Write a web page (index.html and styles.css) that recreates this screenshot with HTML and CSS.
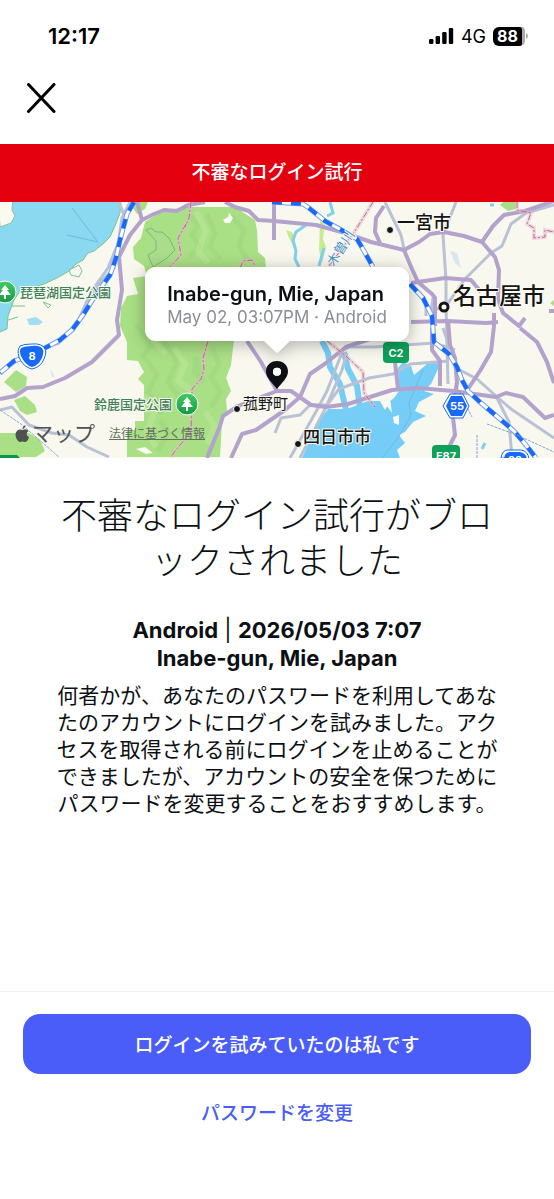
FILE: index.html
```html
<!DOCTYPE html>
<html lang="ja">
<head>
<meta charset="utf-8">
<meta name="viewport" content="width=device-width, initial-scale=1">
<title>不審なログイン試行</title>
<link rel="stylesheet" href="styles.css">
</head>
<body>
<div class="screen">
  <div class="status">
    <span class="clock">12:17</span>
    <div class="indicators">
      <svg class="signal" width="25" height="18" viewBox="0 0 25 18" aria-hidden="true"><rect x="0" y="12" width="4.400" height="5" rx="1.200"/><rect x="6.600" y="9" width="4.400" height="8" rx="1.200"/><rect x="13.200" y="5" width="4.400" height="12" rx="1.200"/><rect x="19.800" y="1" width="4.400" height="16" rx="1.200"/></svg>
      <span class="network">4G</span>
      <div class="battery"><span class="level">88</span><svg width="6" height="18" viewBox="0 0 6 18" aria-hidden="true"><path d="M0 0q3 0 3 5v8q0 5-3 5z" fill="#aaa"/><path d="M4 6q2 1 2 3t-2 3z" fill="#aaa"/></svg></div>
    </div>
  </div>
  <header class="bar">
    <button class="close" type="button" aria-label="閉じる"><svg width="30" height="30" viewBox="0 0 30 30" aria-hidden="true"><path d="M2.500 1.500L28 28.500M28 1.500L2.500 28.500"/></svg></button>
  </header>
  <div class="banner">不審なログイン試行</div>

  <section class="map" aria-label="地図">
    <svg class="canvas" viewBox="0 202 554 256" preserveAspectRatio="xMidYMid slice" aria-hidden="true">
      <defs>
        <linearGradient id="bay" x1="0" y1="0" x2="1" y2="1"><stop offset="0" stop-color="#7ad0f6"/><stop offset="1" stop-color="#72ccf8"/></linearGradient>
        <linearGradient id="tree" x1="0" y1="0" x2="0" y2="1"><stop offset="0" stop-color="#43cc64"/><stop offset="1" stop-color="#139a43"/></linearGradient>
        <path id="motorways" d="M134 202L127 214L120 240L116 258L110 275L95 296L83 315L72 330L60 340L32 355L14 361L0 373M272 202L303 204L309 208L325 221L345 232L357 239L364 251L373 267M410 284L423 298L432 316L434 342L449 354L457 367L462 380L468 391L481 403L500 419L514 431L526 445L536 458"/>
      </defs>
      <rect y="202" width="554" height="256" fill="#f9f8ef"/>

      <path class="lake" d="M0 200H121L120 213L115 226L110 237L103 244L94 251L88 253L83 260L76 264L69 271L57 278L44 284L30 288L20 291L14 300L8 316L7 329L0 332Z"/>
      <path class="land" d="M-2 198H13L12 210L15 216L11 223L0 227Z"/>
      <path class="shore" d="M121 200L120 213L115 226L110 237L103 244L94 251L88 253L83 260L76 264L69 271L57 278L44 284L30 288L20 291L14 300L8 316L7 329L0 332M69 270L79 265L82 271L79 277L71 275ZM12 306H25M8 320L18 317M43 302L51 305L48 308Z"/>
      <path d="M67 235L98 242L72 208" class="route"/>
      <path d="M27 319L36 317L43 322L39 325H29Z" fill="#a6dcf2"/>

      <path class="forest" d="M186 207L162 211L145 222L141 238L133 247L134 259L144 266L147 276L133 278L138 294L127 296L121 308L120 326L127 342L127 360L138 361L144 372L138 379L144 385V421H135V430H127V457H220L222 422L227 411L226 399L231 391L226 378L231 365L233 348L240 300L266 269L265 258L258 252L257 230L255 220L244 213L235 207Z"/>
      <path class="forest" d="M130 202H148L145 209L137 214L133 208ZM4 382L16 370L27 377L26 386L16 392ZM14 400L25 396L35 405L37 412L27 415L20 411ZM0 433H29L40 440L45 451L36 457H0ZM503 202H516V209L508 211L500 205ZM550 303L554 300V306Z"/>
      <path fill="#c8ea91" d="M286 230L292 232L295 238L293 246L289 238ZM320 221L325 224L323 239L326 247L322 263L319 250Z"/>
      <path class="ridge-dark" d="M155 280L167 290L158 302L170 314L160 327M188 214L198 225L192 235L199 246L189 258M207 214L215 233L210 247L221 260M232 216L244 230L239 247L249 261M136 325L151 345L143 356L157 374L148 393L162 414M162 338L177 362L168 382L181 400M212 347L219 364L211 377L220 392L211 407M160 420L168 434L158 451M196 357L203 382L194 372Z"/>
      <path class="ridge-light" d="M149 302L163 319L151 338L166 354M174 348L185 364L178 381L192 391M196 211L206 231L198 251L208 263M145 395L154 413L147 432L156 447M205 412L215 426L207 444"/>
      <path fill="#fbfaf2" d="M229 213L233 218L230 223H225L223 220L228 217ZM136 449L145 447L153 453L146 454Z"/>
      <path class="park" d="M146 230L151 228L156 232L162 232L169 238L175 250L166 259L153 267L148 255L156 250V241Z"/>

      <path class="bay" d="M302 458L309 443L316 424L328 409L347 409L368 401H380L385 410L390 401L394 398L399 391L398 368L403 362L411 366L414 375L427 364L437 361L439 367L431 384L424 391L434 394L419 402L415 411L426 416L413 422L405 432L399 435L405 443L397 450L400 458Z"/>
      <path fill="#fbfaf2" d="M384 403L390 398L392 413L387 406ZM393 417L399 415V425L394 423Z"/>
      <path class="channel" d="M322 341L328 353L330 367L340 384L346 410M344 352L348 369L357 386L360 408"/>
      <path class="route" d="M423 370L409 403L411 416L397 439L382 458"/>
      <path class="stream" d="M306 225L296 232L293 240L296 251L295 259L299 267M330 202L333 213L327 216M319 266L324 248M490 205H494M482 449L485 443"/>
      <path fill="#d7e6f2" d="M450 251L457 253L461 268L455 263ZM50 368L55 377L52 377Z"/>

      <g class="minor">
        <path d="M119 202L126 220L117 246L108 268L91 292L78 321L59 343L34 351L0 371"/>
        <path d="M130 202L122 218L118 245L114 268L97 286L89 302"/>
        <path d="M0 410L12 407L29 425L52 433L69 435L87 447L109 457"/>
        <path d="M385 202L401 235L404 249M456 202L443 235L446 280V304L448 384M554 205L526 213L511 224L502 246L491 253L465 279L446 306L431 311L433 298"/>
        <path d="M290 458L318 408L327 391L343 350L365 340M300 458L326 407L342 370L347 353M275 433L281 418L300 415L310 405H327L339 389L369 378L393 374L410 364L449 361M345 347H375L434 343L455 350M426 303V316M443 328L450 348"/>
        <path d="M456 368L477 379L496 396L511 409L554 438M496 396L509 422L512 458"/>
      </g>
      <g class="major">
        <path d="M137 202L142 220L130 235L119 257L122 290L117 320L119 335L111 343L92 362L65 378L43 387L27 388L15 396L0 399M142 220L154 214L164 210L177 211L188 205L205 202"/>
        <path d="M225 202L235 207L249 211L258 220L274 221L316 225L345 233L371 242L404 250L419 242L430 234L444 232L464 236L482 242L493 226L504 215L525 211L554 201M274 201V240"/>
        <path d="M384 206L376 218L375 232L380 243M404 250L412 269L418 282L432 294L435 298V326M411 283L445 278L471 280L481 292M482 242L495 257L499 270L498 299L503 313L519 326L525 318M494 313L494 326L491 352L480 371L468 389M411 322L447 321L486 323L498 322M432 328V350L440 361V386M448 320L450 345L455 358L457 383L452 409L455 435L449 447"/>
        <path d="M247 341L261 362L277 391L291 391L311 405L326 407L348 404L370 397L392 390L418 388L453 391L496 397L506 393L523 397L545 418L554 415M207 458L220 426L223 416L238 406L277 391M231 458L242 434L256 430L285 410L300 397L310 374L326 363L346 347L373 338M395 362L398 389M520 328L537 342L547 362L554 383M549 311H554"/>
      </g>
      <use href="#motorways" class="motorway-case"/>
      <use href="#motorways" class="motorway-core"/>
      <use href="#motorways" class="motorway"/>
      <path class="ferry" d="M0 410L21 424L59 457M487 424L517 435L554 452M477 435V458M455 383L472 417"/>
      <g class="borders">
        <path id="bounds" class="border-case" d="M191 202L189 218L185 227M186 224L178 238L181 255L170 267M240 268L243 261L252 260L255 266M373 202L355 231L329 266M327 341L346 356L363 372L364 393L375 407M517 202V210L531 213L527 224L534 228V238L545 237V230L554 232M208 341L203 358L204 370L201 379L192 389L191 432L175 451L171 457"/>
        <path class="border" d="M191 202L189 218L185 227M186 224L178 238L181 255L170 267M240 268L243 261L252 260L255 266M373 202L355 231L329 266M327 341L346 356L363 372L364 393L375 407M517 202V210L531 213L527 224L534 228V238L545 237V230L554 232M208 341L203 358L204 370L201 379L192 389L191 432L175 451L171 457"/>
      </g>

      <g class="shield">
        <path d="M32 344Q42 343 45 349Q47 352 44 359Q41 366 35 368Q32 370 29 368Q22 365 19 357Q17 350 20 346Q24 344 32 344Z" fill="#fff" stroke="#1769f8" stroke-width="1"/>
        <path d="M32 346Q41 345 43 350Q44 352 42 358Q38 366 32 367Q25 365 21 356Q19 351 21 348Q25 346 32 346Z" fill="#1769f8"/>
        <text x="32" y="360">8</text>
        <path d="M450 394H463L469 406L463 418H450L443 406Z" fill="#fff" stroke="#1769f8"/>
        <path d="M451 396H462L467 406L462 416H451L446 406Z" fill="#1769f8"/>
        <text x="457" y="410">55</text>
        <rect x="383" y="342" width="26" height="21" rx="4" fill="#0da15a"/><text x="396" y="357">C2</text>
        <rect x="432" y="445" width="28" height="21" rx="4" fill="#0da15a"/><text x="446" y="460">E87</text>
        <path d="M501 458Q502 450 508 450H521Q528 451 529 459Z" fill="#fff" stroke="#1769f8"/><path d="M504 458Q505 452 510 452H520Q526 453 527 459Z" fill="#1769f8"/><text x="515" y="464">23</text>
        <path d="M0 455H17L20 458H0Z" fill="#0a9454"/>
      </g>
      <g>
        <g><circle cx="5" cy="292" r="11" fill="url(#tree)" stroke="#fff"/><path d="M5 285L9 290H7L11 295H6V299H4V295H-1L3 290H1Z" fill="#fff"/></g>
        <g><circle cx="187" cy="404" r="11" fill="url(#tree)" stroke="#fff"/><path d="M187 397L191 402H189L193 407H188V411H186V407H181L185 402H183Z" fill="#fff"/></g>
      </g>
      <g class="place-dots"><circle cx="390" cy="230" r="3.500"/><circle cx="237" cy="409" r="3.500"/><circle cx="298" cy="444" r="3.500"/></g>
      <circle cx="444" cy="307" r="4" fill="#fff" stroke="#151515" stroke-width="3"/>
      <g class="labels">
        <text class="park-name" x="20" y="297">琵琶湖国定公園</text>
        <text class="park-name" x="94" y="409">鈴鹿国定公園</text>
        <text class="town" x="397" y="229">一宮市</text>
        <text class="city" x="453" y="304">名古屋市</text>
        <text class="village" x="243" y="409">菰野町</text>
        <text class="town bold" x="303" y="443">四日市市</text>
        <text class="river" transform="translate(334 267) rotate(-57)">木曽川</text>
      </g>
    </svg>
    <div class="callout">
      <strong class="place">Inabe-gun, Mie, Japan</strong>
      <span class="when">May 02, 03:07PM · Android</span>
    </div>
    <svg class="pin" width="24" height="30" viewBox="0 0 24 30" aria-hidden="true"><path fill-rule="evenodd" d="M12 1C5.500 1 1 5.500 1 11.500C1 18 7.500 23 12 29C16.500 23 23 18 23 11.500C23 5.500 18.500 1 12 1ZM12 7.800A4 4 0 1 1 12 15.800A4 4 0 1 1 12 7.800Z"/><circle cx="12" cy="11.800" r="4" fill="#fff"/></svg>
    <div class="credits">
      <span class="brand"><svg width="15" height="18" viewBox="0 0 15 18" aria-hidden="true"><path d="M10.500 0Q10.700 3 7.500 4.200Q7.400 1.300 10.500 0ZM7.700 5Q10.800 3.200 13.500 6Q9.500 9 14 12.500Q11.700 18 9 16.800Q7.500 16.100 6 16.800Q3.500 18 1.400 13.500Q-.8 8.500 2.300 5.600Q4.500 3.800 7.700 5Z"/></svg>マップ</span>
      <a class="legal" href="#">法律に基づく情報</a>
    </div>
  </section>

  <main class="content">
    <h1>不審なログイン試行がブロックされました</h1>
    <div class="attempt"><b>Android</b> | <b>2026/05/03 7:07</b><br><b>Inabe-gun, Mie, Japan</b></div>
    <p>何者かが、あなたのパスワードを利用してあなたのアカウントにログインを試みました。アクセスを取得される前にログインを止めることができましたが、アカウントの安全を保つためにパスワードを変更することをおすすめします。</p>
  </main>

  <footer class="actions">
    <button class="primary" type="button">ログインを試みていたのは私です</button>
    <button class="secondary" type="button">パスワードを変更</button>
  </footer>
</div>
</body>
</html>
```

FILE: styles.css
```css
* { box-sizing: border-box; }
body {
  margin: 0;
  background: #fff;
  color: #0c1014;
  font-family: Inter, "Noto Sans CJK JP", sans-serif;
}
button { border: 0; background: none; padding: 0; font: inherit; cursor: pointer; }
.screen { min-height: 100vh; display: flex; flex-direction: column; }

.status {
  display: flex;
  justify-content: space-between;
  align-items: center;
  height: 72px;
  padding: 0 26px 0 48px;
  color: #000;
}
.clock { font-size: 22px; font-weight: 600; }
.indicators { display: flex; align-items: center; gap: 7px; }
.network { font-size: 18px; }
.battery { display: flex; align-items: center; }
.level {
  width: 29px;
  height: 19px;
  border-radius: 6px 2px 2px 6px;
  background: #000;
  color: #fff;
  font-size: 16px;
  font-weight: 700;
  line-height: 19px;
  text-align: center;
}

.bar { display: flex; align-items: center; height: 72px; padding: 0 26px 20px; }
.close { display: flex; color: #000; }
.close svg { fill: none; stroke: currentColor; stroke-width: 3; stroke-linecap: round; }

.banner {
  background: #e5000f;
  color: #fff;
  font-size: 19px;
  font-weight: 500;
  line-height: 58px;
  text-align: center;
}

.map {
  position: relative;
  display: flex;
  flex-direction: column;
  align-items: center;
  height: 256px;
  padding-top: 65px;
  overflow: hidden;
}
.canvas { position: absolute; inset: 0; width: 100%; height: 100%; }
.lake { fill: #8bd8f1; }
.land { fill: #fbfaf0; stroke: #7fc79c; }
.shore { fill: none; stroke: #79c68c; stroke-width: 1; }
.route { fill: none; stroke: #72b7dc; stroke-width: 1; }
.forest { fill: #a9df85; }
.ridge-dark { fill: none; stroke: #85c870; stroke-width: 5; opacity: .2; }
.ridge-light { fill: none; stroke: #c9efa5; stroke-width: 6; opacity: .35; }
.park { fill: #abdc8c; stroke: #72bd72; }
.bay { fill: url(#bay); }
.channel { fill: none; stroke: #76cdf5; stroke-width: 6; }
.stream { fill: none; stroke: #81d1ec; stroke-width: 3; }
.minor { fill: none; stroke: #b9c1d5; stroke-width: 3; stroke-linejoin: round; }
.major { fill: none; stroke: #b3a2cc; stroke-width: 4; stroke-linejoin: round; }
.motorway-case { fill: none; stroke: #6f9df0; stroke-width: 5; }
.motorway-core { fill: none; stroke: #fff; stroke-width: 3; }
.motorway { fill: none; stroke: #1769f8; stroke-width: 4; stroke-dasharray: 10 9; }
.ferry { fill: none; stroke: #82a5df; stroke-width: 1; stroke-dasharray: 3 1; }
.border-case { fill: none; stroke: #e8b9cd; stroke-width: 4; opacity: .5; }
.border { fill: none; stroke: #ba6c91; stroke-width: 1; stroke-dasharray: 6 2 2 2; }
.shield text { fill: #fff; font-size: 11px; font-weight: 700; text-anchor: middle; }
.place-dots { fill: #151515; stroke: #fff; stroke-width: 1; }
.labels text { paint-order: stroke; stroke: #fbfaf2; stroke-width: 2; stroke-linejoin: round; fill: #151515; }
.labels .park-name { font-size: 13px; fill: #3e8158; font-weight: 500; }
.labels .town { font-size: 18px; font-weight: 500; }
.labels .bold { font-size: 17px; }
.labels .village { font-size: 15px; }
.labels .city { font-size: 23px; font-weight: 500; }
.labels .river { font-size: 13px; fill: #4b91c9; }

.callout {
  position: relative;
  display: flex;
  flex-direction: column;
  height: 74px;
  padding: 15px 22px;
  border-radius: 11px;
  background: #fff;
  filter: drop-shadow(0 3px 8px rgba(0, 0, 0, .3));
}
.callout::after {
  content: "";
  position: absolute;
  top: 100%;
  left: 50%;
  width: 26px;
  height: 12px;
  margin-left: -13px;
  background: #fff;
  clip-path: polygon(0 0, 100% 0, 58% 88%, 50% 100%, 42% 88%);
}
.place { font-size: 20px; font-weight: 600; line-height: 25px; }
.when { font-size: 17px; line-height: 20px; color: #8b8d98; }
.pin { position: relative; flex: none; margin-top: 19px; fill: #0c1014; }
.credits {
  position: relative;
  display: flex;
  align-items: center;
  align-self: stretch;
  gap: 14px;
  margin-top: 28px;
  padding-left: 15px;
  color: #4e514f;
}
.brand { display: flex; align-items: center; gap: 2px; font-size: 21px; line-height: 32px; }
.brand svg { fill: currentColor; }
.legal { color: #617061; font-size: 12px; line-height: 16px; }

.content { flex: 1; padding: 36px 48px 20px; text-align: center; line-break: loose; }
h1 { margin: 0; font-size: 36px; font-weight: 300; line-height: 45px; }
.attempt { margin-top: 32px; font-size: 22px; line-height: 28px; }
.attempt b { font-weight: 700; }
p { margin: 10px 0 0; font-size: 21px; line-height: 27px; }

.actions {
  display: flex;
  flex-direction: column;
  align-items: stretch;
  gap: 16px;
  padding: 22px 23px 64px;
  border-top: 1px solid #eef0f3;
  font-size: 19px;
  font-weight: 500;
}
.primary { height: 60px; padding-bottom: 2px; border-radius: 17px; background: #4a5df9; color: #fff; }
.secondary { height: 45px; padding-bottom: 2px; color: #4a5df9; }
```
